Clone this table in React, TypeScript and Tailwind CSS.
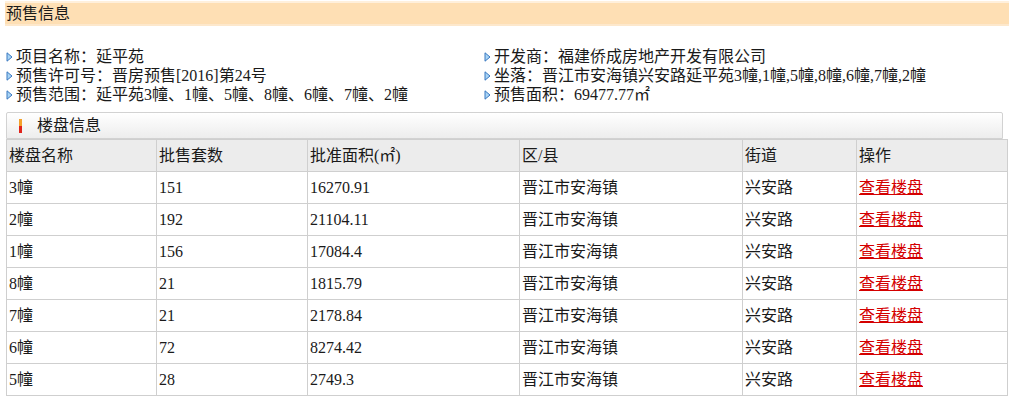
const rows = [
  ["3幢", "151", "16270.91"],
  ["2幢", "192", "21104.11"],
  ["1幢", "156", "17084.4"],
  ["8幢", "21", "1815.79"],
  ["7幢", "21", "2178.84"],
  ["6幢", "72", "8274.42"],
  ["5幢", "28", "2749.3"],
];

function Arrow() {
  return (
    <svg width="7" height="10" viewBox="0 0 7 10" className="mr-[3px] shrink-0">
      <path d="M1 0.8 L6 5 L1 9.2 Z" fill="#a8d4f5" stroke="#3a78c0" strokeWidth="1" />
    </svg>
  );
}

function Info({ children }: { children: React.ReactNode }) {
  return (
    <div className="flex items-center h-[19px] whitespace-nowrap">
      <Arrow />
      <span>{children}</span>
    </div>
  );
}

export default function App() {
  return (
    <div
      className="w-[1009px] h-[398px] overflow-hidden bg-white text-[16px] text-[#1a1a1a]"
      style={{ fontFamily: '"Liberation Serif", "Noto Sans CJK SC", serif' }}
    >
      <div className="ml-[5px] mt-[1px] h-[25px] flex items-center pl-[1px] border-t-2 border-b-2 border-t-[#fff0dc] border-b-[#fde8cc] bg-[#fedfb4] leading-none">
        预售信息
      </div>

      <div className="grid grid-cols-[478px_1fr] ml-[6px] mt-[21px] leading-[19px]">
        <div>
          <Info>项目名称：延平苑</Info>
          <Info>预售许可号：晋房预售[2016]第24号</Info>
          <Info>预售范围：延平苑3幢、1幢、5幢、8幢、6幢、7幢、2幢</Info>
        </div>
        <div>
          <Info>开发商：福建侨成房地产开发有限公司</Info>
          <Info>坐落：晋江市安海镇兴安路延平苑3幢,1幢,5幢,8幢,6幢,7幢,2幢</Info>
          <Info>预售面积：69477.77㎡</Info>
        </div>
      </div>

      <div className="ml-[6px] mt-[8px] w-[997px] h-[27px] border border-[#d2d2d2] rounded-t-[2px] bg-gradient-to-b from-white to-[#ededed] flex items-center">
        <div className="ml-[12px] w-[3px] h-[14px] flex flex-col">
          <div className="flex-1 bg-[#f4a12a]" />
          <div className="flex-1 bg-[#e0231c]" />
        </div>
        <span className="ml-[15px] leading-none">楼盘信息</span>
      </div>

      <table className="ml-[6px] w-[1001px] border-collapse table-fixed">
        <colgroup>
          <col className="w-[150px]" />
          <col className="w-[151px]" />
          <col className="w-[212px]" />
          <col className="w-[223px]" />
          <col className="w-[114px]" />
          <col className="w-[151px]" />
        </colgroup>
        <thead>
          <tr className="h-[32px] bg-[#ececec]">
            {["楼盘名称", "批售套数", "批准面积(㎡)", "区/县", "街道", "操作"].map((h) => (
              <th key={h} className="border border-[#cfcfcf] px-[2px] text-left font-normal">
                {h}
              </th>
            ))}
          </tr>
        </thead>
        <tbody>
          {rows.map((r) => (
            <tr key={r[0]} className="h-[32px]">
              <td className="border border-[#cfcfcf] px-[2px]">{r[0]}</td>
              <td className="border border-[#cfcfcf] px-[2px]">{r[1]}</td>
              <td className="border border-[#cfcfcf] px-[2px]">{r[2]}</td>
              <td className="border border-[#cfcfcf] px-[2px]">晋江市安海镇</td>
              <td className="border border-[#cfcfcf] px-[2px]">兴安路</td>
              <td className="border border-[#cfcfcf] px-[2px]">
                <a href="#" className="text-[#d40000] underline">
                  查看楼盘
                </a>
              </td>
            </tr>
          ))}
        </tbody>
      </table>
    </div>
  );
}
